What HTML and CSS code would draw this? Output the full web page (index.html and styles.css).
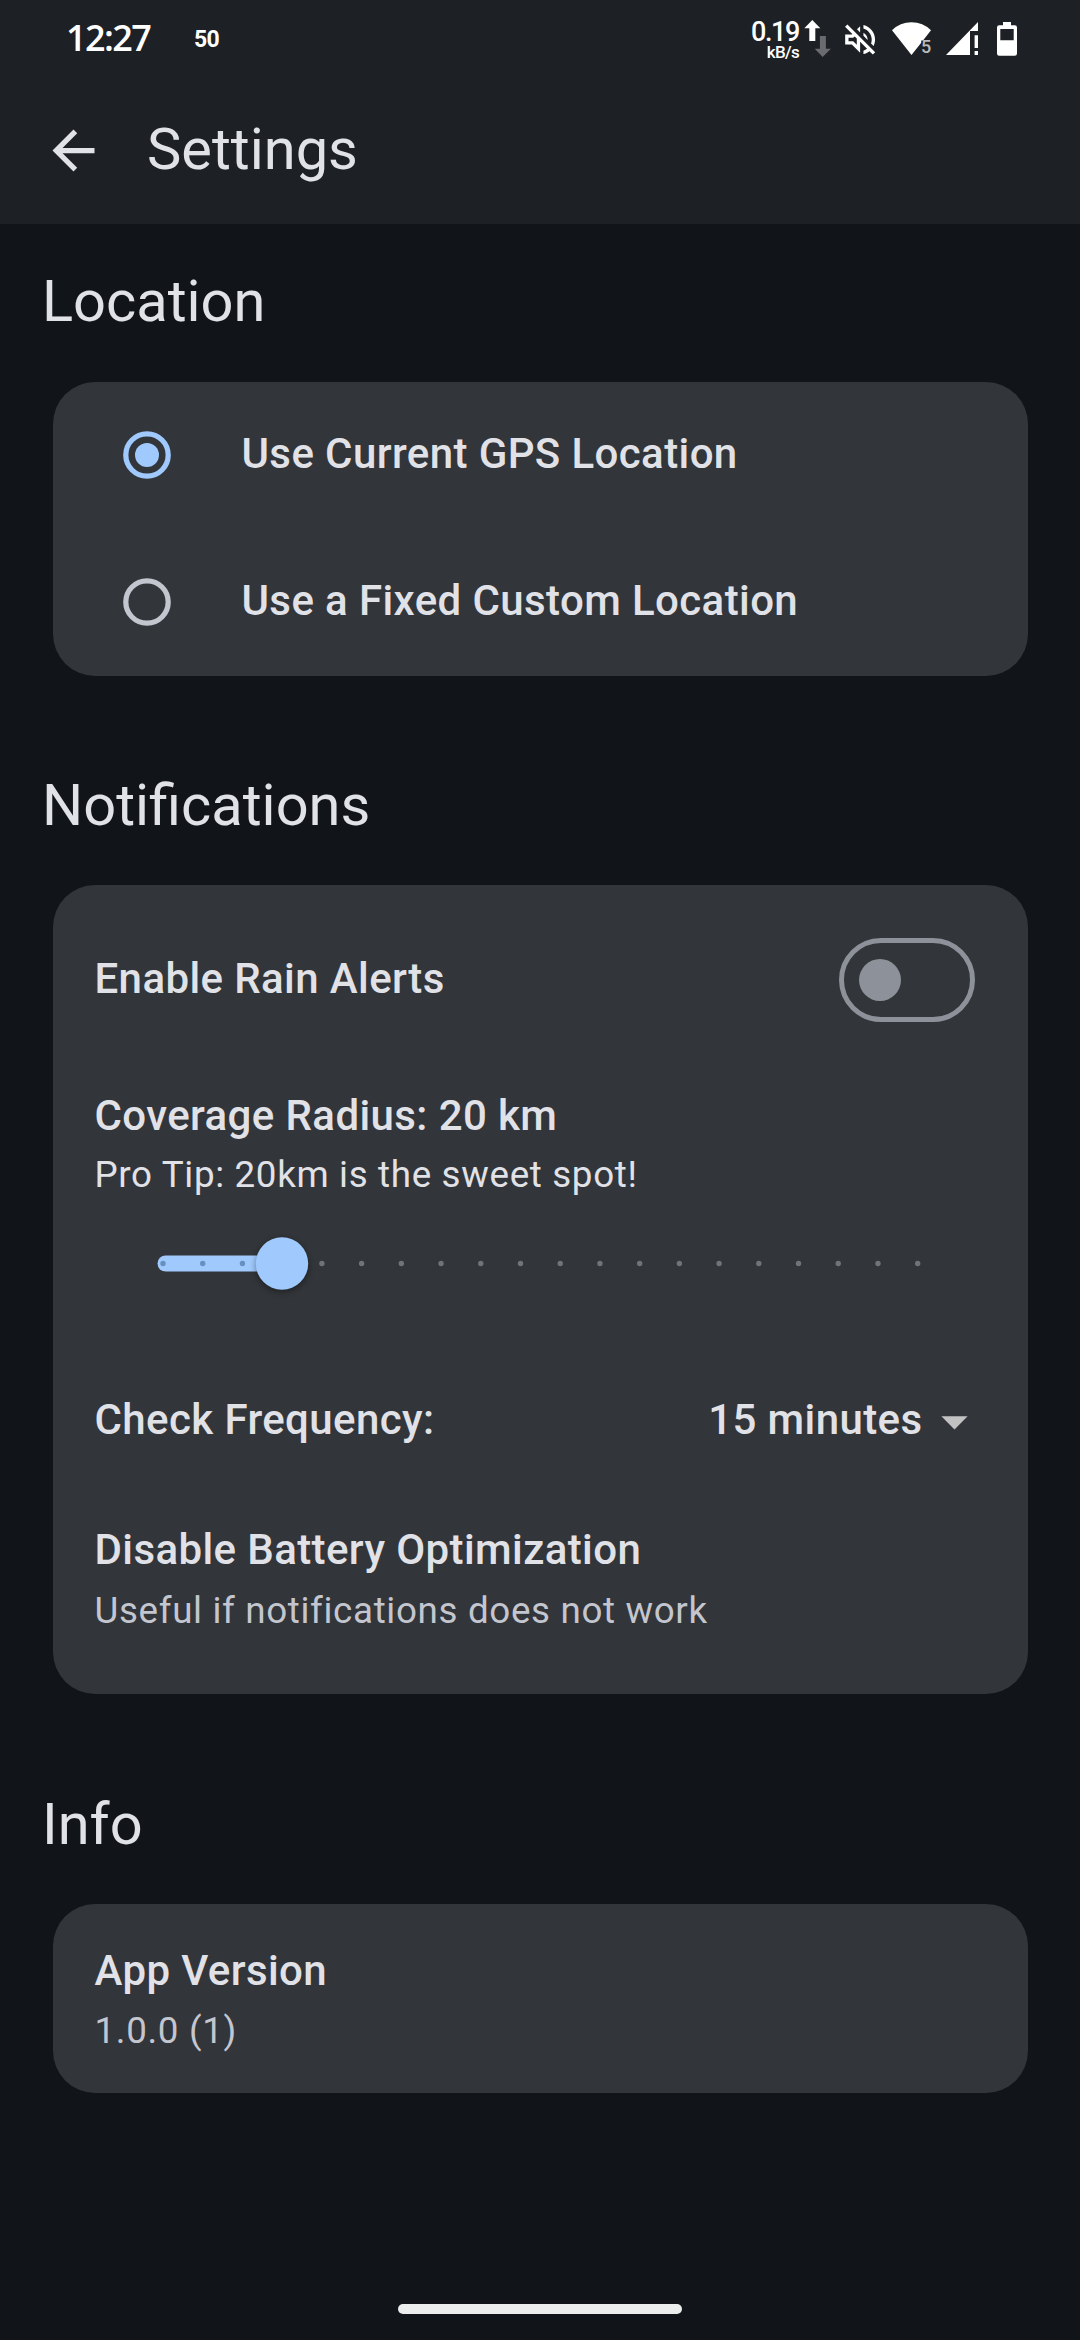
FILE: index.html
```html
<!DOCTYPE html>
<html lang="en">
<head>
<meta charset="utf-8">
<title>Settings</title>
<link rel="stylesheet" href="styles.css">
</head>
<body>
<header class="top">
  <div class="status">
    <span class="clock">12:27</span>
    <span class="speed">50</span>
    <div class="net"><span class="rate">0.19</span><span class="unit">kB/s</span></div>
    <svg width="42" height="77" viewBox="800 0 42 77">
      <path fill="#fff" d="M812.3 20l8 8.300h-5V41h-6V28.300h-5z"/>
      <path fill="#696b6e" d="M822.700 57l-8-8.300h5.200V36h6v12.700h5z"/>
    </svg>
    <svg width="46" height="77" viewBox="842 0 46 77">
      <path fill="#fff" transform="translate(840.200 19.600) scale(1.660)" d="M4.340 2.930L2.930 4.340 7.290 8.700 7 9H3v6h4l5 5v-6.590l4.180 4.180c-.65.49-1.380.88-2.180 1.110v2.060c1.340-.3 2.570-.92 3.610-1.750l2.050 2.050 1.410-1.410L4.340 2.930zM10 15.170L7.830 13H5v-2h2.830l.88-.88L10 11.410v3.760zM19 12c0 .82-.15 1.610-.41 2.340l1.530 1.530c.56-1.170.88-2.480.88-3.870 0-4.280-2.990-7.860-7-8.770v2.060c2.890.86 5 3.540 5 6.710zm-7-8l-1.880 1.880L12 7.760V4zm4.500 8c0-1.770-1.020-3.290-2.500-4.030v1.790l2.480 2.480c.01-.08.02-.16.02-.24z"/>
    </svg>
    <svg width="52" height="77" viewBox="888 0 52 77">
      <path fill="#fff" d="M892 30.200Q900 22.200 911.500 22.200T931 30.200L923 40.500H921.200V42.800L911.500 55z"/>
      <text class="wifi-band" x="921" y="53">5</text>
    </svg>
    <svg width="46" height="77" viewBox="940 0 46 77">
      <path fill="#fff" d="M946 55L978 22v9h-8v24zM974.600 35.300h3.400V48h-3.400zM974.600 51h3.400v4h-3.400z"/>
    </svg>
    <svg width="40" height="77" viewBox="986 0 40 77">
      <path fill="#fff" fill-rule="evenodd" d="M1003 22h8v3.300h3.800q2.200 0 2.200 2.200V53.600q0 2.200-2.200 2.200h-15.600q-2.200 0-2.200-2.200V27.500q0-2.200 2.200-2.200h3.800zM1000.300 29v11.300h13.400V29z"/>
    </svg>
  </div>
  <div class="toolbar">
    <svg class="back" viewBox="0 0 24 24"><path fill="#e1e2e8" d="M20 11H7.830l5.590-5.590L12 4l-8 8 8 8 1.410-1.410L7.830 13H20v-2z"/></svg>
    <h1 class="title">Settings</h1>
  </div>
</header>
<main class="content">
  <h2 class="heading">Location</h2>
  <section class="card card-location">
    <label class="option">
      <svg class="radio" viewBox="0 0 48 48"><circle cx="24" cy="24" r="21.200" fill="none" stroke="#a0cafd" stroke-width="5.250"/><circle cx="24" cy="24" r="12" fill="#a0cafd"/></svg>
      <span class="label">Use Current GPS Location</span>
    </label>
    <label class="option">
      <svg class="radio" viewBox="0 0 48 48"><circle cx="24" cy="24" r="21.200" fill="none" stroke="#c3c6cf" stroke-width="5.250"/></svg>
      <span class="label">Use a Fixed Custom Location</span>
    </label>
  </section>

  <h2 class="heading">Notifications</h2>
  <section class="card card-notifications">
    <div class="row row-alerts">
      <span class="label">Enable Rain Alerts</span>
      <span class="switch"><span class="switch-thumb"></span></span>
    </div>
    <div class="radius">
      <div class="label">Coverage Radius: 20 km</div>
      <div class="sub sub-strong">Pro Tip: 20km is the sweet spot!</div>
    </div>
    <svg class="slider" width="891" height="125" viewBox="0 0 891 125">
      <path d="M188 54.500H70.500a8 8 0 0 0 0 16H188z" fill="#a0cafd"/>
      <path d="M68 62.500H148" stroke="#6590bf" stroke-width="5.400" stroke-linecap="round" stroke-dasharray="0 39.720"/>
      <path d="M226.900 62.500H823" stroke="#717377" stroke-width="5.400" stroke-linecap="round" stroke-dasharray="0 39.720"/>
      <circle class="thumb" cx="187" cy="62.500" r="26.200" fill="#a0cafd"/>
    </svg>
    <div class="row row-frequency">
      <span class="label">Check Frequency:</span>
      <span class="select"><span class="label">15 minutes</span><svg class="caret" viewBox="0 0 24 24"><path fill="#c2c2c3" d="M7 10l5 5 5-5z"/></svg></span>
    </div>
    <div class="label">Disable Battery Optimization</div>
    <div class="sub">Useful if notifications does not work</div>
  </section>

  <h2 class="heading">Info</h2>
  <section class="card card-info">
    <div class="label">App Version</div>
    <div class="sub">1.0.0 (1)</div>
  </section>
</main>
<footer class="nav"><div class="pill"></div></footer>
</body>
</html>
```

FILE: styles.css
```css
* { box-sizing: border-box; }
body {
  margin: 0;
  width: 1080px;
  height: 2340px;
  display: flex;
  flex-direction: column;
  overflow: hidden;
  background: #111418;
  color: #e1e2e8;
  font-family: Roboto, sans-serif;
}
svg { display: block; flex: none; }
h1, h2 { margin: 0; font-weight: 400; }

.top { height: 224px; background: #1d2024; }
.status { display: flex; height: 77px; color: #fff; white-space: nowrap; }
.clock {
  width: 128px;
  margin-left: 66px;
  font: 600 36px/76px "Open Sans", sans-serif;
  letter-spacing: -1.6px;
}
.speed { font-size: 23px; font-weight: 700; line-height: 80px; letter-spacing: -0.6px; }
.net {
  display: flex;
  flex-direction: column;
  align-items: flex-end;
  margin: 0 1px 0 auto;
  padding-top: 19px;
}
.rate { font-size: 27px; font-weight: 500; line-height: 27px; letter-spacing: -1.4px; }
.unit { font-size: 17px; font-weight: 500; line-height: 13px; letter-spacing: -0.7px; }
.status svg:last-child { margin-right: 54px; }
.wifi-band { font: 500 18px Roboto, sans-serif; fill: #b9babc; }

.toolbar { display: flex; align-items: center; height: 147px; padding-left: 42px; }
.back { width: 63px; height: 63px; }
.title {
  margin-left: 42px;
  padding-bottom: 3px;
  font-size: 57.75px;
  line-height: 74px;
}

.content { flex: 1; padding-top: 40px; }
.heading {
  margin: 0 0 43.5px 42px;
  font-size: 57.75px;
  line-height: 74px;
}
.card {
  margin: 0 52.5px;
  padding: 0 42px;
  border-radius: 42px;
  background: #323539;
}
.card-location { height: 294px; margin-bottom: 92px; }
.card-notifications { height: 808.5px; margin-bottom: 93px; }
.card-info { height: 189px; padding-top: 34.5px; }

.label {
  font-size: 42px;
  font-weight: 500;
  line-height: 63px;
  letter-spacing: 0.394px;
  white-space: nowrap;
}
.sub {
  margin-top: 3.5px;
  font-size: 36.75px;
  line-height: 52px;
  letter-spacing: 0.656px;
  color: #c3c6cf;
}
.sub-strong { margin-top: 2px; color: #e1e2e8; }

.option { display: flex; align-items: center; gap: 70.5px; height: 147px; padding-left: 28.5px; }
.option .label, .row .label { padding-bottom: 3px; }
.radio { width: 48px; height: 48px; }

.row { display: flex; align-items: center; justify-content: space-between; }
.row-alerts { height: 189px; padding-right: 10.5px; }
.switch {
  display: flex;
  align-items: center;
  width: 136.5px;
  height: 84px;
  padding-left: 15.75px;
  border: 5.25px solid #8d9199;
  border-radius: 42px;
}
.switch-thumb { width: 42px; height: 42px; border-radius: 50%; background: #8d9199; }

.radius { padding-top: 10px; }
.slider { overflow: visible; }
.thumb { filter: drop-shadow(0 2px 3px rgba(0, 0, 0, 0.4)); }
.row-frequency { height: 191px; margin-bottom: 1px; }
.row-frequency .label { padding-bottom: 5px; }
.select { display: flex; align-items: center; }
.caret { width: 63px; height: 63px; }

.nav { display: flex; justify-content: center; height: 36px; }
.pill { width: 284px; height: 10px; border-radius: 5px; background: #eceeed; }
```
